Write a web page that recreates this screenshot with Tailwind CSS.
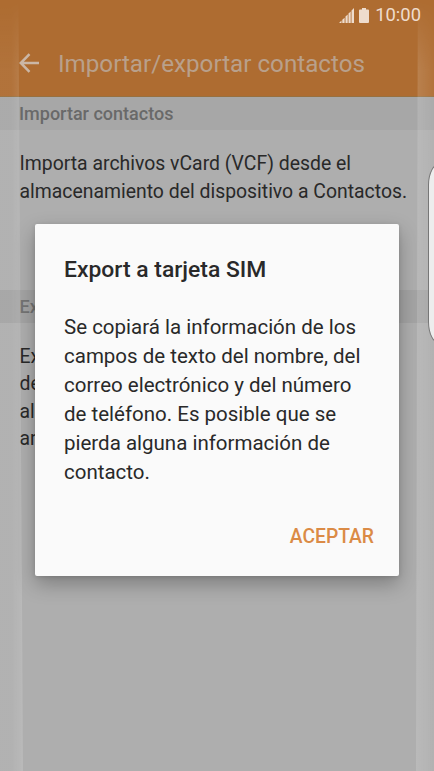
<!DOCTYPE html>
<html lang="es">
<head>
<meta charset="utf-8">
<title>Importar/exportar contactos</title>
<script src="https://cdn.jsdelivr.net/npm/@tailwindcss/browser@4"></script>
</head>
<body class="bg-[#aeaeae]">
<div class="relative h-[771px] w-[434px] overflow-hidden bg-[#aeaeae] font-['Roboto',sans-serif] text-[#292929]">
  <header class="h-[97px] border-b border-[#98703f] bg-[#ae6c31]">
    <div class="flex h-[30px] items-center justify-end pr-[13px] text-[#eedccd]">
      <svg class="mr-[5px] h-[15px] w-[15px]" viewBox="0 0 15 15" fill="currentColor"><path d="M0 15l2.500-2.500V15zM3.300 11.700l2.300-2V15H3.300zM6.500 8.500l2.200-2V15H6.500zM9.500 5.500l2.200-2V15H9.500zM12.500 2.500L15 0v15h-2.500z"/></svg>
      <svg class="mr-[6px] h-[15px] w-[10px]" viewBox="0 0 10 15" fill="currentColor"><path d="M3 0h4v1.500h2q1 0 1 1V14q0 1-1 1H1q-1 0-1-1V2.500q0-1 1-1h2z"/></svg>
      <span class="text-[18.400px] leading-[30px]">10:00</span>
    </div>
    <div class="flex h-[66px] items-center pl-[19px]">
      <svg class="h-[20px] w-[20px]" viewBox="0 0 20 20" fill="none" stroke="#cbb7a6" stroke-width="2.500"><path d="M10.500 1.200L1.800 10l8.700 8.800M2 10h18"/></svg>
      <h1 class="ml-[19px] whitespace-nowrap pt-[2px] text-[24.200px] leading-[30px] text-[#b9a08b]">Importar/exportar contactos</h1>
    </div>
  </header>
  <main>
    <h2 class="h-[33px] bg-[#a7a7a7] pl-[19px] text-[18px] font-medium leading-[34px] text-[#696969]">Importar contactos</h2>
    <p class="h-[160px] whitespace-nowrap pl-[19.500px] pt-[20px] text-[19.400px] leading-[27.500px]">Importa archivos vCard (VCF) desde el<br>almacenamiento del dispositivo a Contactos.</p>
    <h2 class="h-[33px] bg-[#a4a4a4] pl-[19.500px] text-[18px] font-medium leading-[34px] text-[#747474]">Ex</h2>
    <p class="pl-[19.500px] pt-[19.500px] text-[19.400px] leading-[27.500px]">Ex<br>de<br>al<br>ar</p>
  </main>
  <div class="absolute inset-y-0 left-0 w-[23px] bg-linear-to-r from-white/5 via-white/5 to-white/15 mask-t-from-[700px] mask-t-to-[771px] [clip-path:polygon(80%_0,100%_100%,0_100%,0_0)]"></div>
  <div class="absolute inset-y-0 right-0 w-[18px] bg-linear-to-l from-white/5 via-white/10 to-white/15 mask-t-from-[700px] mask-t-to-[771px] [clip-path:polygon(10%_0,100%_0,100%_100%,0_100%)]"></div>
  <div class="absolute left-[428px] top-[163px] h-[181px] w-[24px] rounded-[12px/22px] border-[1.500px] border-[#777] bg-[#ededed]"></div>
  <section role="dialog" class="absolute left-[35px] top-[224px] flex h-[352px] w-[364px] flex-col rounded-[2px] bg-[#fafafa] pl-[29px] pr-[25px] pt-[31px] shadow-[0_8px_20px_rgba(0,0,0,0.28),0_1px_4px_rgba(0,0,0,0.12)]">
    <h3 class="whitespace-nowrap text-[22.900px] font-medium leading-[30px]">Export a tarjeta SIM</h3>
    <p class="mt-[28px] whitespace-nowrap text-[20.500px] leading-[28.900px]">Se copiará la información de los<br>campos de texto del nombre, del<br>correo electrónico y del número<br>de teléfono. Es posible que se<br>pierda alguna información de<br>contacto.</p>
    <button class="mt-[36px] self-end text-[19.300px] font-medium leading-[30px] text-[#db8b46]">ACEPTAR</button>
  </section>
</div>
</body>
</html>
